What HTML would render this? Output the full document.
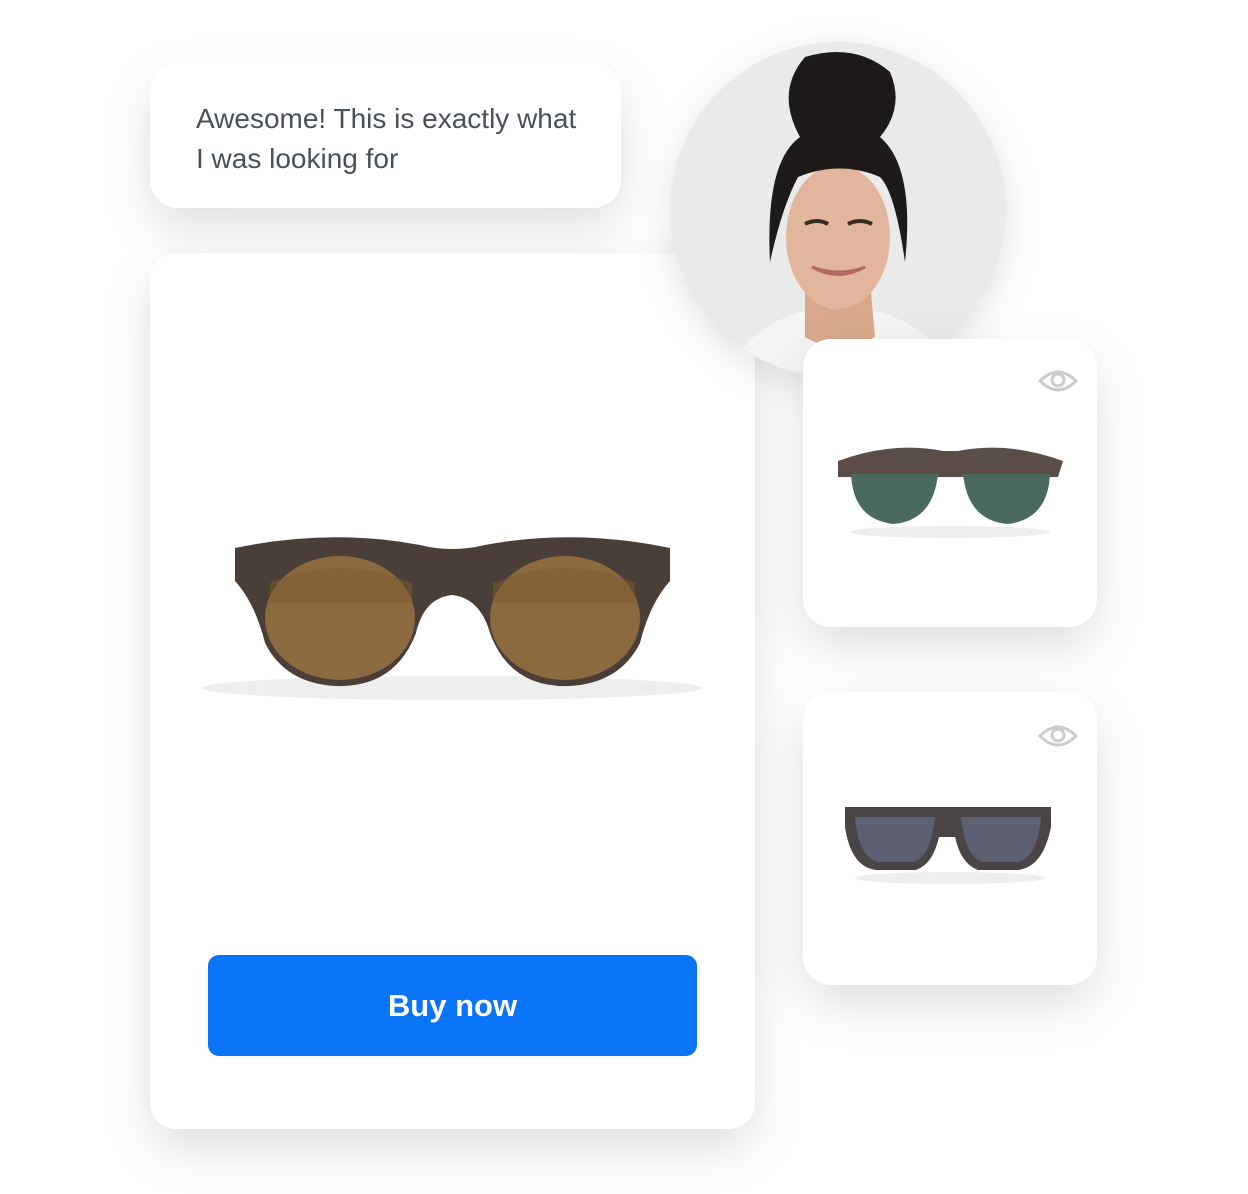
<!DOCTYPE html>
<html><head><meta charset="utf-8"><style>
body{margin:0;width:1248px;height:1194px;background:#fff;position:relative;overflow:hidden;font-family:"Liberation Sans",sans-serif}
.card{position:absolute;background:#fff;box-shadow:0 20px 50px rgba(0,0,0,.13)}
.bubble{left:150px;top:63px;width:471px;height:145px;border-radius:28px;}
.bubble p{margin:0;position:absolute;left:46px;top:36px;font-size:28px;line-height:40px;color:#4a505a}
.main{left:150px;top:253px;width:605px;height:876px;border-radius:26px}
.btn{position:absolute;left:58px;top:702px;width:489px;height:101px;background:#0a74f7;border-radius:11px;color:#fff;font-weight:bold;font-size:31px;text-align:center;line-height:101px}
.small{left:803px;width:294px;border-radius:28px}
.avatar{position:absolute;left:670px;top:42px;width:336px;height:336px;border-radius:50%;overflow:hidden;background:#e9eaea;box-shadow:0 10px 40px rgba(0,0,0,.12)}
</style></head><body>
<div class="card bubble"><p>Awesome! This is exactly what<br>I was looking for</p></div>
<div class="card main">
<svg style="position:absolute;left:30px;top:270px" width="545" height="200" viewBox="0 0 545 200">
<ellipse cx="272" cy="165" rx="250" ry="12" fill="#eee"/>
<path d="M55 25 Q150 5 240 22 Q272 30 305 22 Q395 5 490 25 L490 58 Q470 80 460 120 Q440 160 390 163 Q330 165 310 110 Q300 75 272 72 Q244 75 236 110 Q215 165 155 163 Q105 160 85 120 Q75 80 55 58 Z" fill="#4a3e38"/>
<ellipse cx="160" cy="95" rx="75" ry="62" fill="#8a6a3e"/>
<ellipse cx="385" cy="95" rx="75" ry="62" fill="#8a6a3e"/>
<path d="M90 60 Q160 30 232 60 L232 80 L90 80Z" fill="#7a5a2e" opacity=".5"/>
<path d="M313 60 Q385 30 455 60 L455 80 L313 80Z" fill="#7a5a2e" opacity=".5"/>
</svg>
<div class="btn">Buy now</div>
</div>
<div class="avatar">
<svg width="336" height="336" viewBox="0 0 336 336">
<path d="M50 336 Q80 285 130 270 L210 270 Q260 285 300 336Z" fill="#f4f4f4"/>
<path d="M135 240 L200 240 L205 295 Q168 315 135 295Z" fill="#d9a88c"/>
<ellipse cx="168" cy="195" rx="52" ry="72" fill="#e2b69c"/>
<path d="M100 220 Q95 120 130 95 Q105 50 135 15 Q185 0 220 30 Q235 65 210 95 Q245 125 235 220 Q225 150 210 135 Q170 118 128 135 Q112 165 100 220Z" fill="#1e1a1a"/>
<path d="M135 182 Q147 176 158 182 M178 182 Q190 176 202 182" stroke="#3a2a20" stroke-width="4" fill="none"/>
<path d="M142 225 Q168 240 195 225 Q170 235 142 225Z" fill="#fff" stroke="#b06a60" stroke-width="3"/>
</svg>
</div>
<div class="card small" style="top:339px;height:288px">
<svg style="position:absolute;left:235px;top:28px" width="40" height="28" viewBox="0 0 40 28"><path d="M2 14 Q20 -4 38 14 Q20 32 2 14Z" fill="none" stroke="#ccc" stroke-width="3"/><circle cx="20" cy="13" r="6" fill="none" stroke="#ccc" stroke-width="3"/></svg>
<svg style="position:absolute;left:30px;top:100px" width="235" height="110" viewBox="0 0 235 110">
<ellipse cx="117" cy="93" rx="100" ry="6" fill="#eee"/>
<path d="M5 22 Q60 2 110 12 L125 12 Q175 2 230 22 L225 38 L5 38Z" fill="#5a4e48"/>
<path d="M18 35 Q20 80 60 85 Q100 82 105 35Z" fill="#4b6a5e"/>
<path d="M130 35 Q135 82 175 85 Q215 80 217 35Z" fill="#4b6a5e"/>
</svg>
</div>
<div class="card small" style="top:692px;height:293px">
<svg style="position:absolute;left:235px;top:30px" width="40" height="28" viewBox="0 0 40 28"><path d="M2 14 Q20 -4 38 14 Q20 32 2 14Z" fill="none" stroke="#ccc" stroke-width="3"/><circle cx="20" cy="13" r="6" fill="none" stroke="#ccc" stroke-width="3"/></svg>
<svg style="position:absolute;left:40px;top:110px" width="215" height="90" viewBox="0 0 215 90">
<ellipse cx="107" cy="76" rx="95" ry="6" fill="#eee"/>
<path d="M2 5 L208 5 L208 25 Q200 65 175 68 L135 68 Q118 62 112 35 L96 35 Q90 62 73 68 L33 68 Q8 65 2 25Z" fill="#4a4446"/>
<path d="M12 15 L92 15 Q88 55 70 60 L35 60 Q15 55 12 15Z" fill="#5c6070"/>
<path d="M118 15 L198 15 Q195 55 175 60 L140 60 Q122 55 118 15Z" fill="#5c6070"/>
</svg>
</div>
</body></html>
